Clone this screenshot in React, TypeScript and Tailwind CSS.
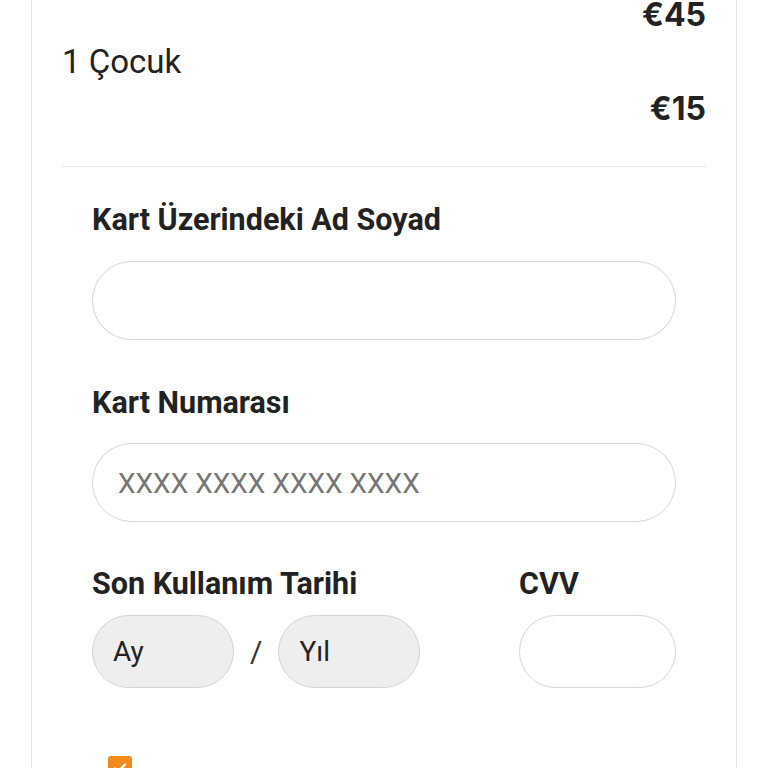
export default function App() {
  return (
    <div className="w-[768px] h-[768px] overflow-hidden bg-white font-['Roboto',sans-serif] text-[#222]">
      <div className="mx-[31px] h-full border-x border-[#e6e6e6] px-[30px]">
        <div className="pt-[1px] text-right font-['Inter',sans-serif] text-[32px] font-bold leading-[28px]">€45</div>
        <div className="mt-[17px] text-[33px] leading-[32px]">1 Çocuk</div>
        <div className="mt-[15px] text-right font-['Inter',sans-serif] text-[32px] font-bold leading-[32px]">€15</div>
        <div className="mt-[41px] h-px bg-[#e6e6e6]" />
        <div className="px-[30px]">
          <div className="mt-[37px] text-[30.5px] font-bold leading-[31px]">Kart Üzerindeki Ad Soyad</div>
          <div className="mt-[26px] h-[79px] rounded-full border border-[#d6d6d6] bg-white" />
          <div className="mt-[47px] text-[30.5px] font-bold leading-[31px]">Kart Numarası</div>
          <div className="mt-[25px] flex h-[79px] items-center rounded-full border border-[#d6d6d6] bg-white pl-[25px]">
            <span className="mt-[3px] text-[28px] leading-none text-[#767676]">XXXX XXXX XXXX XXXX</span>
          </div>
          <div className="mt-[46px] flex justify-between">
            <div>
              <div className="text-[30.5px] font-bold leading-[31px]">Son Kullanım Tarihi</div>
              <div className="mt-[16px] flex items-center">
                <div className="flex h-[73px] w-[142px] items-center rounded-full border border-[#d4d4d4] bg-[#eeeeee] pl-[20px] text-[28px]">Ay</div>
                <span className="mx-[16px] text-[30px] text-[#333]">/</span>
                <div className="flex h-[73px] w-[142px] items-center rounded-full border border-[#d4d4d4] bg-[#eeeeee] pl-[20px] text-[28px]">Yıl</div>
              </div>
            </div>
            <div className="w-[157px]">
              <div className="text-[30.5px] font-bold leading-[31px]">CVV</div>
              <div className="mt-[16px] h-[73px] rounded-full border border-[#d6d6d6] bg-white" />
            </div>
          </div>
          <div className="mt-[68px] pl-[16px]">
            <div className="flex h-[24px] w-[24px] items-center justify-center rounded-[3px] bg-[#f28a1e]">
              <svg width="16" height="16" viewBox="0 0 16 16" fill="none">
                <path d="M3 8.5l3.2 3.2L13 4.5" stroke="white" strokeWidth="2.4" strokeLinecap="round" strokeLinejoin="round" />
              </svg>
            </div>
          </div>
        </div>
      </div>
    </div>
  );
}
